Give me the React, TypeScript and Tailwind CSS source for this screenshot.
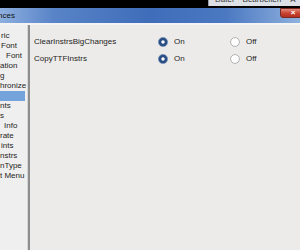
import React from 'react';

const listItems: { text: string; pad: string }[] = [
  { text: 'ric', pad: 'pl-[1px]' },
  { text: 'Font', pad: 'pl-[1px]' },
  { text: 'Font', pad: 'pl-[6px]' },
  { text: 'ation', pad: 'pl-0' },
  { text: 'g', pad: 'pl-0' },
  { text: 'hronize', pad: 'pl-0' },
  { text: '', pad: 'pl-0' },
  { text: 'nts', pad: 'pl-0' },
  { text: 's', pad: 'pl-0' },
  { text: 'Info', pad: 'pl-[4px]' },
  { text: 'rate', pad: 'pl-0' },
  { text: 'ints', pad: 'pl-[1px]' },
  { text: 'nstrs', pad: 'pl-0' },
  { text: 'nType', pad: 'pl-0' },
  { text: 't Menu', pad: 'pl-0' },
];

const prefs = [
  { name: 'ClearInstrsBigChanges', on: true },
  { name: 'CopyTTFInstrs', on: true },
];

function Radio({ checked }: { checked: boolean }) {
  return (
    <svg width="10" height="10" viewBox="0 0 10 10" className="shrink-0">
      {checked ? (
        <>
          <circle cx="5" cy="5" r="4.6" fill="#2b4f85" stroke="#6f8fb8" strokeWidth="0.6" />
          <circle cx="5" cy="5" r="1.7" fill="#ffffff" />
        </>
      ) : (
        <circle cx="5" cy="5" r="4.4" fill="#ffffff" stroke="#a9a9a9" strokeWidth="0.9" />
      )}
    </svg>
  );
}

export default function App() {
  return (
    <div className="w-[300px] h-[250px] overflow-hidden flex flex-col bg-[#ecebe9] font-['Liberation_Sans',Arial,sans-serif] text-[8px] text-[#1e1e1e]">
      {/* screen behind the window */}
      <div className="h-[8px] flex shrink-0">
        <div className="flex-1 bg-black" />
        <div className="w-[92px] flex flex-col">
          <div className="h-[6px] bg-[#dde1e6] border-l border-[#9aa0a8] overflow-hidden">
            <div className="-mt-[5px] leading-[10px] whitespace-nowrap text-[#333] pl-[6px]">
              Datei&nbsp;&nbsp;&nbsp;&nbsp;Bearbeiten&nbsp;&nbsp;&nbsp;&nbsp;A
            </div>
          </div>
          <div className="flex-1 bg-black" />
        </div>
      </div>

      {/* Title bar */}
      <div className="h-[15px] shrink-0 flex items-center overflow-hidden bg-[linear-gradient(90deg,#8eb0e0_0%,#5883c7_18%,#3f6db9_50%,#4a78c1_75%,#8fb0de_100%)]">
        <span className="-ml-[2px] text-[8px] text-[#111] whitespace-nowrap">nces</span>
        <div className="flex-1" />
        <div className="w-[26px] h-[10px] self-start -mr-[6px] rounded-bl-[3px] bg-[linear-gradient(180deg,#e08a7a_0%,#c8412f_55%,#b0301f_100%)] border border-[#7a2a20] flex items-center justify-center text-white text-[8px] font-bold leading-none">
          ×
        </div>
      </div>
      <div className="h-[2px] shrink-0 bg-[#f4f4f4]" />

      {/* Body */}
      <div className="flex-1 flex min-h-0">
        <div className="w-[27px] shrink-0 bg-[#efefef] pt-[6px] overflow-hidden">
          {listItems.map((item, i) => (
            <div
              key={i}
              className={`h-[10px] leading-[10px] whitespace-nowrap ${item.pad} ${i === 6 ? 'bg-[#74a3dc] mr-[2px]' : ''}`}
            >
              {item.text}
            </div>
          ))}
        </div>
        <div className="w-[3px] shrink-0 flex">
          <div className="w-px bg-[#d6d6d6]" />
          <div className="w-[2px] bg-[#8e8e8e]" />
        </div>

        <div className="flex-1 pt-[8px] pl-[4px]">
          {prefs.map((p) => (
            <div key={p.name} className="h-[17px] grid grid-cols-[124px_72px_1fr] items-center">
              <span className="whitespace-nowrap">{p.name}</span>
              <div className="flex items-center gap-[6px]">
                <Radio checked={p.on} />
                <span>On</span>
              </div>
              <div className="flex items-center gap-[6px]">
                <Radio checked={!p.on} />
                <span>Off</span>
              </div>
            </div>
          ))}
        </div>
      </div>
    </div>
  );
}
